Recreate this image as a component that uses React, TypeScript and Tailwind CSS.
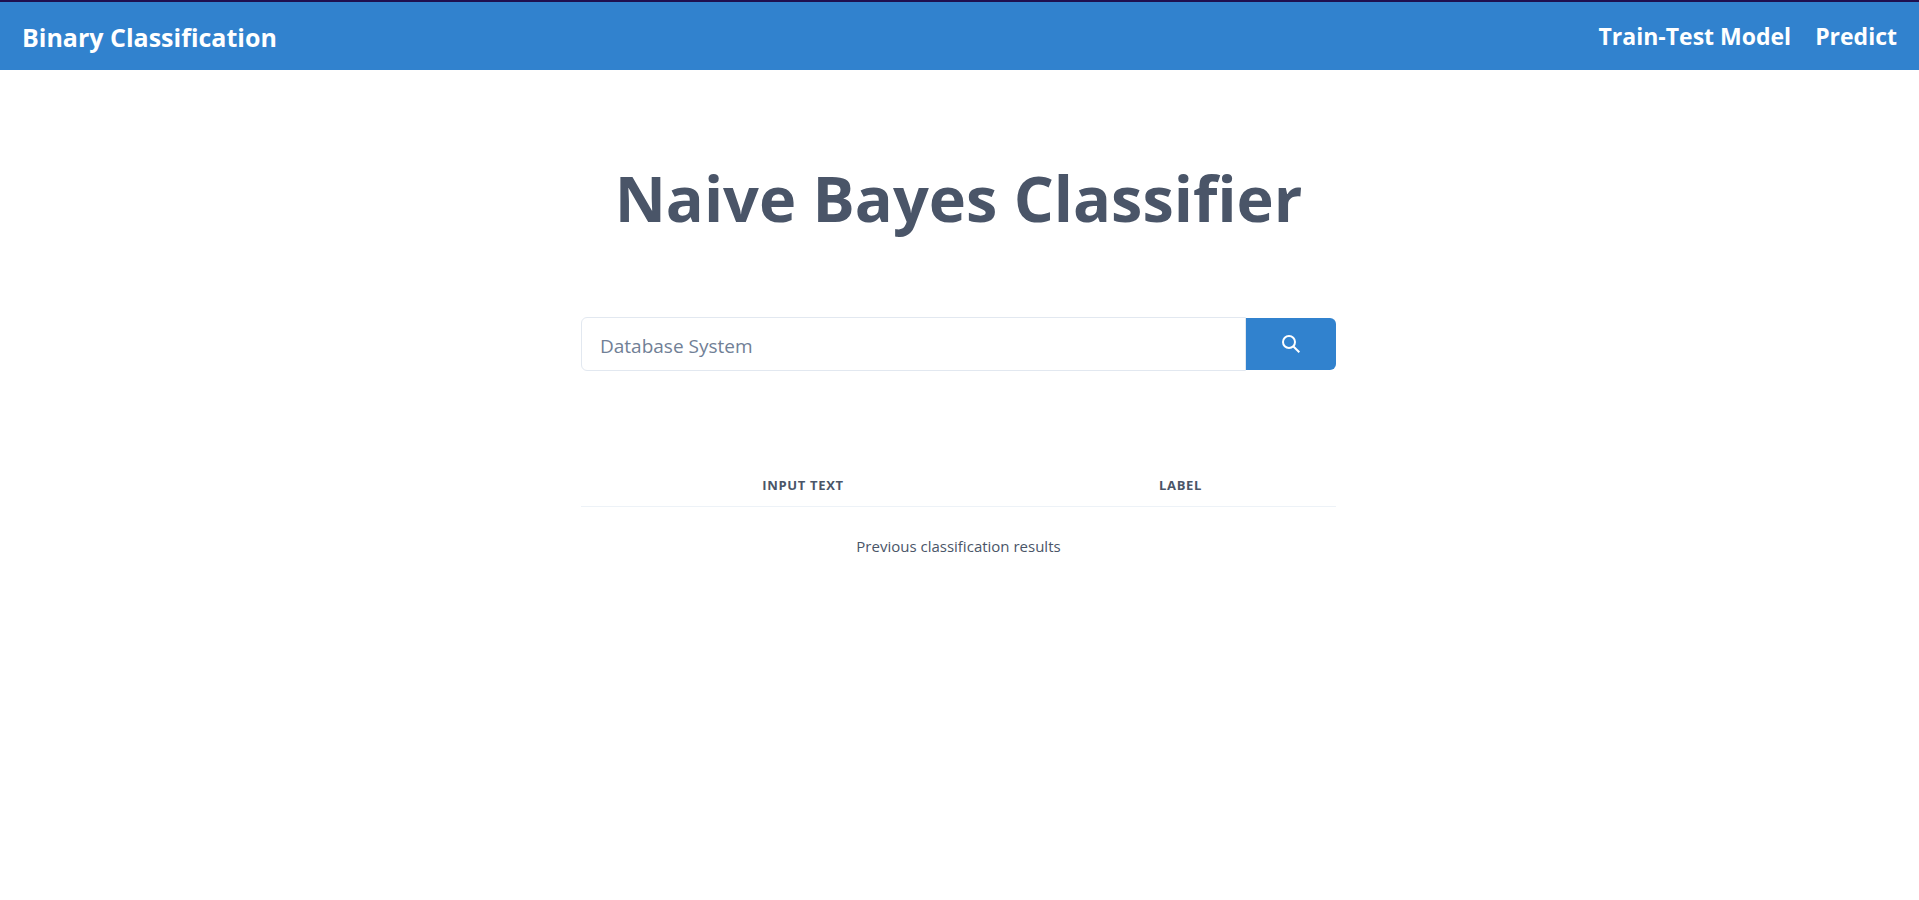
export default function App() {
  return (
    <div className="min-h-screen bg-white font-['Open_Sans','Noto_Sans',sans-serif] text-[#4a5568]">
      <header className="flex h-[70px] items-center justify-between border-t-2 border-[#1f1050] bg-[#3182ce] px-[22px] text-white">
        <a href="#home" className="pt-0.5 text-[25px] leading-9 font-bold">Binary Classification</a>
        <nav className="flex gap-6 text-[23px] leading-8 font-bold">
          <a href="#train">Train-Test Model</a>
          <a href="#predict">Predict</a>
        </nav>
      </header>
      <main className="mx-auto w-full max-w-[757px] pr-0.5">
        <h1 className="pt-[82px] text-center text-[63px] leading-[92px] font-bold">Naive Bayes Classifier</h1>
        <form className="mt-[73px] flex h-[54px]" onSubmit={(e) => e.preventDefault()}>
          <input
            type="text"
            aria-label="Text to classify"
            placeholder="Database System"
            className="min-w-0 flex-1 rounded-l-md border border-[#e2e8f0] px-[18px] pt-1 text-[19px] placeholder:text-[#718096]"
          />
          <button type="submit" aria-label="Classify" className="my-px flex w-[90px] items-center justify-center rounded-r-md bg-[#3182ce] text-white">
            <svg width="18" height="18" viewBox="0 0 18 18" fill="none" stroke="currentColor" strokeWidth="2" aria-hidden="true">
              <circle cx="7" cy="7" r="6" />
              <path d="M11.2 11.2 17.3 17.3" />
            </svg>
          </button>
        </form>
        <table className="mt-[94px] w-full table-fixed">
          <thead>
            <tr className="border-b border-[#edf2f7] text-[13px] leading-4 font-bold tracking-wider uppercase">
              <th scope="col" className="w-[444px] pt-3 pb-[13px]">Input Text</th>
              <th scope="col" className="pt-3 pb-[13px]">Label</th>
            </tr>
          </thead>
          <tbody>
            <tr>
              <td colSpan={2} className="pt-[27px] text-center text-[15px] leading-6 font-medium">Previous classification results</td>
            </tr>
          </tbody>
        </table>
      </main>
    </div>
  );
}
